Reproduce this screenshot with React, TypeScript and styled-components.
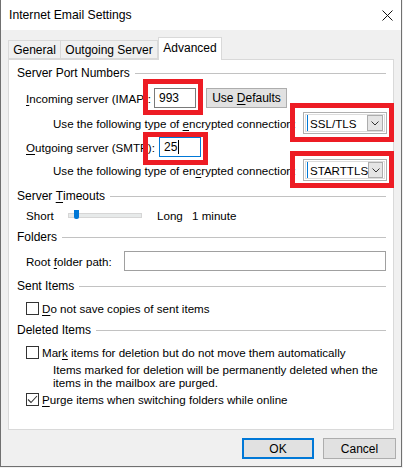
import React from "react";
import styled, { createGlobalStyle } from "styled-components";

const GlobalStyle = createGlobalStyle`
  html, body {
    margin: 0;
    padding: 0;
    background: #f0f0f0;
  }
  body {
    font-family: "Liberation Sans", Arial, sans-serif;
    font-size: 11.6px;
    color: #000;
  }
`;

// 창 틀
const Window = styled.div`
  position: relative;
  width: 402px;
  height: 467px;
  box-sizing: border-box;
  border: 1px solid #707070;
  border-top: none;
  background: #f0f0f0;
  display: flex;
  flex-direction: column;
`;

const TitleBar = styled.div`
  height: 30px;
  flex: none;
  background: #fff;
  display: flex;
  align-items: center;
  justify-content: space-between;
  padding: 0 8px 0 8px;
`;

const Title = styled.span`
  font-size: 12.2px;
  line-height: 16px;
`;

const CloseIcon = () => (
  <svg width="11" height="11" viewBox="0 0 11 11">
    <path d="M0.5 0.5 L10.5 10.5 M10.5 0.5 L0.5 10.5" stroke="#111" strokeWidth="1" fill="none" />
  </svg>
);

const Body = styled.div`
  flex: 1;
  display: flex;
  flex-direction: column;
  padding: 7px 7px 0 7px;
`;

const TabStrip = styled.div`
  display: flex;
  align-items: flex-end;
  height: 22px;
  position: relative;
  z-index: 1;
`;

const Tab = styled.div<{ $active?: boolean; $w: number }>`
  box-sizing: border-box;
  width: ${(p) => p.$w}px;
  height: ${(p) => (p.$active ? 23 : 19)}px;
  margin-bottom: ${(p) => (p.$active ? -1 : 0)}px;
  margin-left: ${(p) => (p.$active ? 0 : -1)}px;
  border: 1px solid #d9d9d9;
  border-bottom: ${(p) => (p.$active ? "none" : "1px solid #d9d9d9")};
  background: ${(p) => (p.$active ? "#fff" : "#f0f0f0")};
  display: flex;
  justify-content: center;
  padding-top: ${(p) => (p.$active ? 2 : 1)}px;
  line-height: 16px;
  font-size: 12px;
  white-space: nowrap;

  &:first-child {
    margin-left: 0;
  }
`;

const Panel = styled.div`
  box-sizing: border-box;
  height: 371px;
  background: #fff;
  border: 1px solid #d9d9d9;
  padding: 5px 7px 0 8px;
  display: flex;
  flex-direction: column;
`;

const Heading = styled.div<{ $mt?: number }>`
  display: flex;
  align-items: center;
  height: 16px;
  margin-top: ${(p) => p.$mt ?? 0}px;
  white-space: nowrap;
  font-size: 12px;

  &::after {
    content: "";
    flex: 1;
    height: 1px;
    background: #c2c2c2;
    margin-left: 5px;
  }
`;

const Row = styled.div<{ $mt: number; $h: number; $indent: number }>`
  display: flex;
  align-items: center;
  height: ${(p) => p.$h}px;
  margin-top: ${(p) => p.$mt}px;
  padding-left: ${(p) => p.$indent}px;
  white-space: nowrap;
`;

const Key = styled.span`
  text-decoration: underline;
  text-underline-offset: 2px;
`;

const Label = styled.span<{ $w?: number; $ml?: number }>`
  flex: none;
  width: ${(p) => (p.$w ? `${p.$w}px` : "auto")};
  margin-left: ${(p) => p.$ml ?? 0}px;
`;

const TextBox = styled.div<{ $w: number; $focus?: boolean; $ml?: number; $line?: string }>`
  box-sizing: border-box;
  width: ${(p) => p.$w}px;
  height: 20px;
  margin-left: ${(p) => p.$ml ?? 0}px;
  background: #fff;
  border: 1px solid ${(p) => (p.$focus ? "#0078d7" : p.$line ?? "#7a7a7a")};
  display: flex;
  align-items: center;
  padding-left: 4px;
  font-size: 12px;
`;

const Caret = styled.span`
  display: inline-block;
  width: 1px;
  height: 14px;
  background: #000;
  margin-left: 1px;
`;

const PushButton = styled.div<{ $w: number; $default?: boolean; $ml?: number; $h?: number }>`
  box-sizing: border-box;
  width: ${(p) => p.$w}px;
  height: ${(p) => p.$h ?? 20}px;
  margin-left: ${(p) => p.$ml ?? 0}px;
  background: #e1e1e1;
  border: ${(p) => (p.$default ? "2px solid #0078d7" : "1px solid #adadad")};
  display: flex;
  align-items: center;
  justify-content: center;
  font-size: 12px;
`;

const Combo = styled.div`
  box-sizing: border-box;
  width: 84px;
  height: 22px;
  margin-left: auto;
  margin-right: -1px;
  background: #fff;
  border: 1px solid #b0b0b0;
  box-shadow: inset 0 0 0 1px #fff, inset 0 0 0 2px #dcdcdc;
  display: flex;
  align-items: center;
  padding: 0 3px 0 3px;
  font-size: 11.6px;
`;

const ComboCaret = styled.span`
  width: 1px;
  height: 16px;
  background: #0078d7;
  margin-right: 2px;
`;

const ComboText = styled.span`
  flex: 1;
`;

const ComboArrow = styled.div`
  box-sizing: border-box;
  width: 16px;
  height: 16px;
  background: #e5e5e5;
  border: 1px solid #adadad;
  display: flex;
  align-items: center;
  justify-content: center;
`;

const Chevron = () => (
  <svg width="8" height="5" viewBox="0 0 8 5">
    <path d="M0.5 0.5 L4 4 L7.5 0.5" stroke="#333" strokeWidth="1" fill="none" />
  </svg>
);

const Track = styled.div`
  position: relative;
  box-sizing: border-box;
  width: 74px;
  height: 5px;
  background: #e7eaea;
  border: 1px solid #d6d6d6;
  flex: none;
`;

const Thumb = styled.div`
  position: absolute;
  left: 5px;
  top: -4px;
  width: 5px;
  height: 9px;
  background: #0078d7;
  border-radius: 0 0 2px 2px;
`;

const Check = styled.div`
  box-sizing: border-box;
  width: 13px;
  height: 13px;
  flex: none;
  background: #fff;
  border: 1px solid #333;
  margin-right: 3px;
  display: flex;
  align-items: center;
  justify-content: center;
`;

const Tick = () => (
  <svg width="11" height="9" viewBox="0 0 11 9">
    <path d="M1 4.5 L4 7.5 L10 1" stroke="#333" strokeWidth="1.1" fill="none" />
  </svg>
);

const Note = styled.div`
  margin-top: 3px;
  padding-left: 36px;
  line-height: 13px;
  white-space: nowrap;
`;

const Footer = styled.div`
  display: flex;
  justify-content: flex-end;
  gap: 9px;
  margin-top: 8px;
  margin-right: -2px;
`;

// 주석용 빨간 테두리
const Marker = styled.div<{ $x: number; $y: number; $w: number; $h: number }>`
  position: absolute;
  left: ${(p) => p.$x}px;
  top: ${(p) => p.$y}px;
  width: ${(p) => p.$w}px;
  height: ${(p) => p.$h}px;
  box-sizing: border-box;
  border: 5px solid #ed1c24;
  pointer-events: none;
`;

const EncryptRow = ({ mt, accel, value }: { mt: number; accel: "e" | "c"; value: string }) => (
  <Row $mt={mt} $h={22} $indent={36}>
    <Label>
      Use the following type of{" "}
      {accel === "e" ? (
        <>
          <Key>e</Key>ncrypted
        </>
      ) : (
        <>
          en<Key>c</Key>rypted
        </>
      )}{" "}
      connection:
    </Label>
    <Combo>
      <ComboCaret />
      <ComboText>{value}</ComboText>
      <ComboArrow>
        <Chevron />
      </ComboArrow>
    </Combo>
  </Row>
);

const App = () => {
  return (
    <>
      <GlobalStyle />
      <Window>
        <TitleBar>
          <Title>Internet Email Settings</Title>
          <CloseIcon />
        </TitleBar>
        <Body>
          <TabStrip>
            <Tab $w={53}>General</Tab>
            <Tab $w={98}>Outgoing Server</Tab>
            <Tab $w={64} $active>
              Advanced
            </Tab>
          </TabStrip>
          <Panel>
            {/* 서버 포트 번호 */}
            <Heading>Server Port Numbers</Heading>
            <Row $mt={7} $h={20} $indent={9}>
              <Label $w={128}>
                <Key>I</Key>ncoming server (IMAP):
              </Label>
              <TextBox $w={42}>993</TextBox>
              <PushButton $w={81} $ml={10}>
                Use&nbsp;<Key>D</Key>efaults
              </PushButton>
            </Row>
            <EncryptRow mt={4} accel="e" value="SSL/TLS" />
            <Row $mt={3} $h={20} $indent={9}>
              <Label $w={133}>
                <Key>O</Key>utgoing server (SMTP):
              </Label>
              <TextBox $w={42} $focus>
                25
                <Caret />
              </TextBox>
            </Row>
            <EncryptRow mt={2} accel="c" value="STARTTLS" />

            {/* 서버 시간 제한 */}
            <Heading $mt={7}>
              Server&nbsp;<Key>T</Key>imeouts
            </Heading>
            <Row $mt={3} $h={16} $indent={9}>
              <Label $w={42}>Short</Label>
              <Track>
                <Thumb />
              </Track>
              <Label $w={35} $ml={15}>
                Long
              </Label>
              <Label>1 minute</Label>
            </Row>

            {/* 폴더 */}
            <Heading $mt={6}>Folders</Heading>
            <Row $mt={6} $h={20} $indent={9}>
              <Label $w={98}>
                Root <Key>f</Key>older path:
              </Label>
              <TextBox $w={262} $line="#a0a0a0" />
            </Row>

            {/* 보낸 항목 */}
            <Heading $mt={7}>Sent Items</Heading>
            <Row $mt={6} $h={16} $indent={9}>
              <Check />
              <Label>
                <Key>D</Key>o not save copies of sent items
              </Label>
            </Row>

            {/* 삭제된 항목 */}
            <Heading $mt={6}>Deleted Items</Heading>
            <Row $mt={6} $h={16} $indent={9}>
              <Check />
              <Label>
                Mar<Key>k</Key> items for deletion but do not move them automatically
              </Label>
            </Row>
            <Note>
              Items marked for deletion will be permanently deleted when the
              <br />
              items in the mailbox are purged.
            </Note>
            <Row $mt={2} $h={16} $indent={9}>
              <Check>
                <Tick />
              </Check>
              <Label>
                <Key>P</Key>urge items when switching folders while online
              </Label>
            </Row>
          </Panel>
          <Footer>
            <PushButton $w={72} $h={21} $default>
              OK
            </PushButton>
            <PushButton $w={73} $h={21}>
              Cancel
            </PushButton>
          </Footer>
        </Body>
        <Marker $x={142} $y={79} $w={60} $h={36} />
        <Marker $x={289} $y={103} $w={104} $h={39} />
        <Marker $x={142} $y={132} $w={65} $h={33} />
        <Marker $x={289} $y={151} $w={104} $h={37} />
      </Window>
    </>
  );
};

export default App;
